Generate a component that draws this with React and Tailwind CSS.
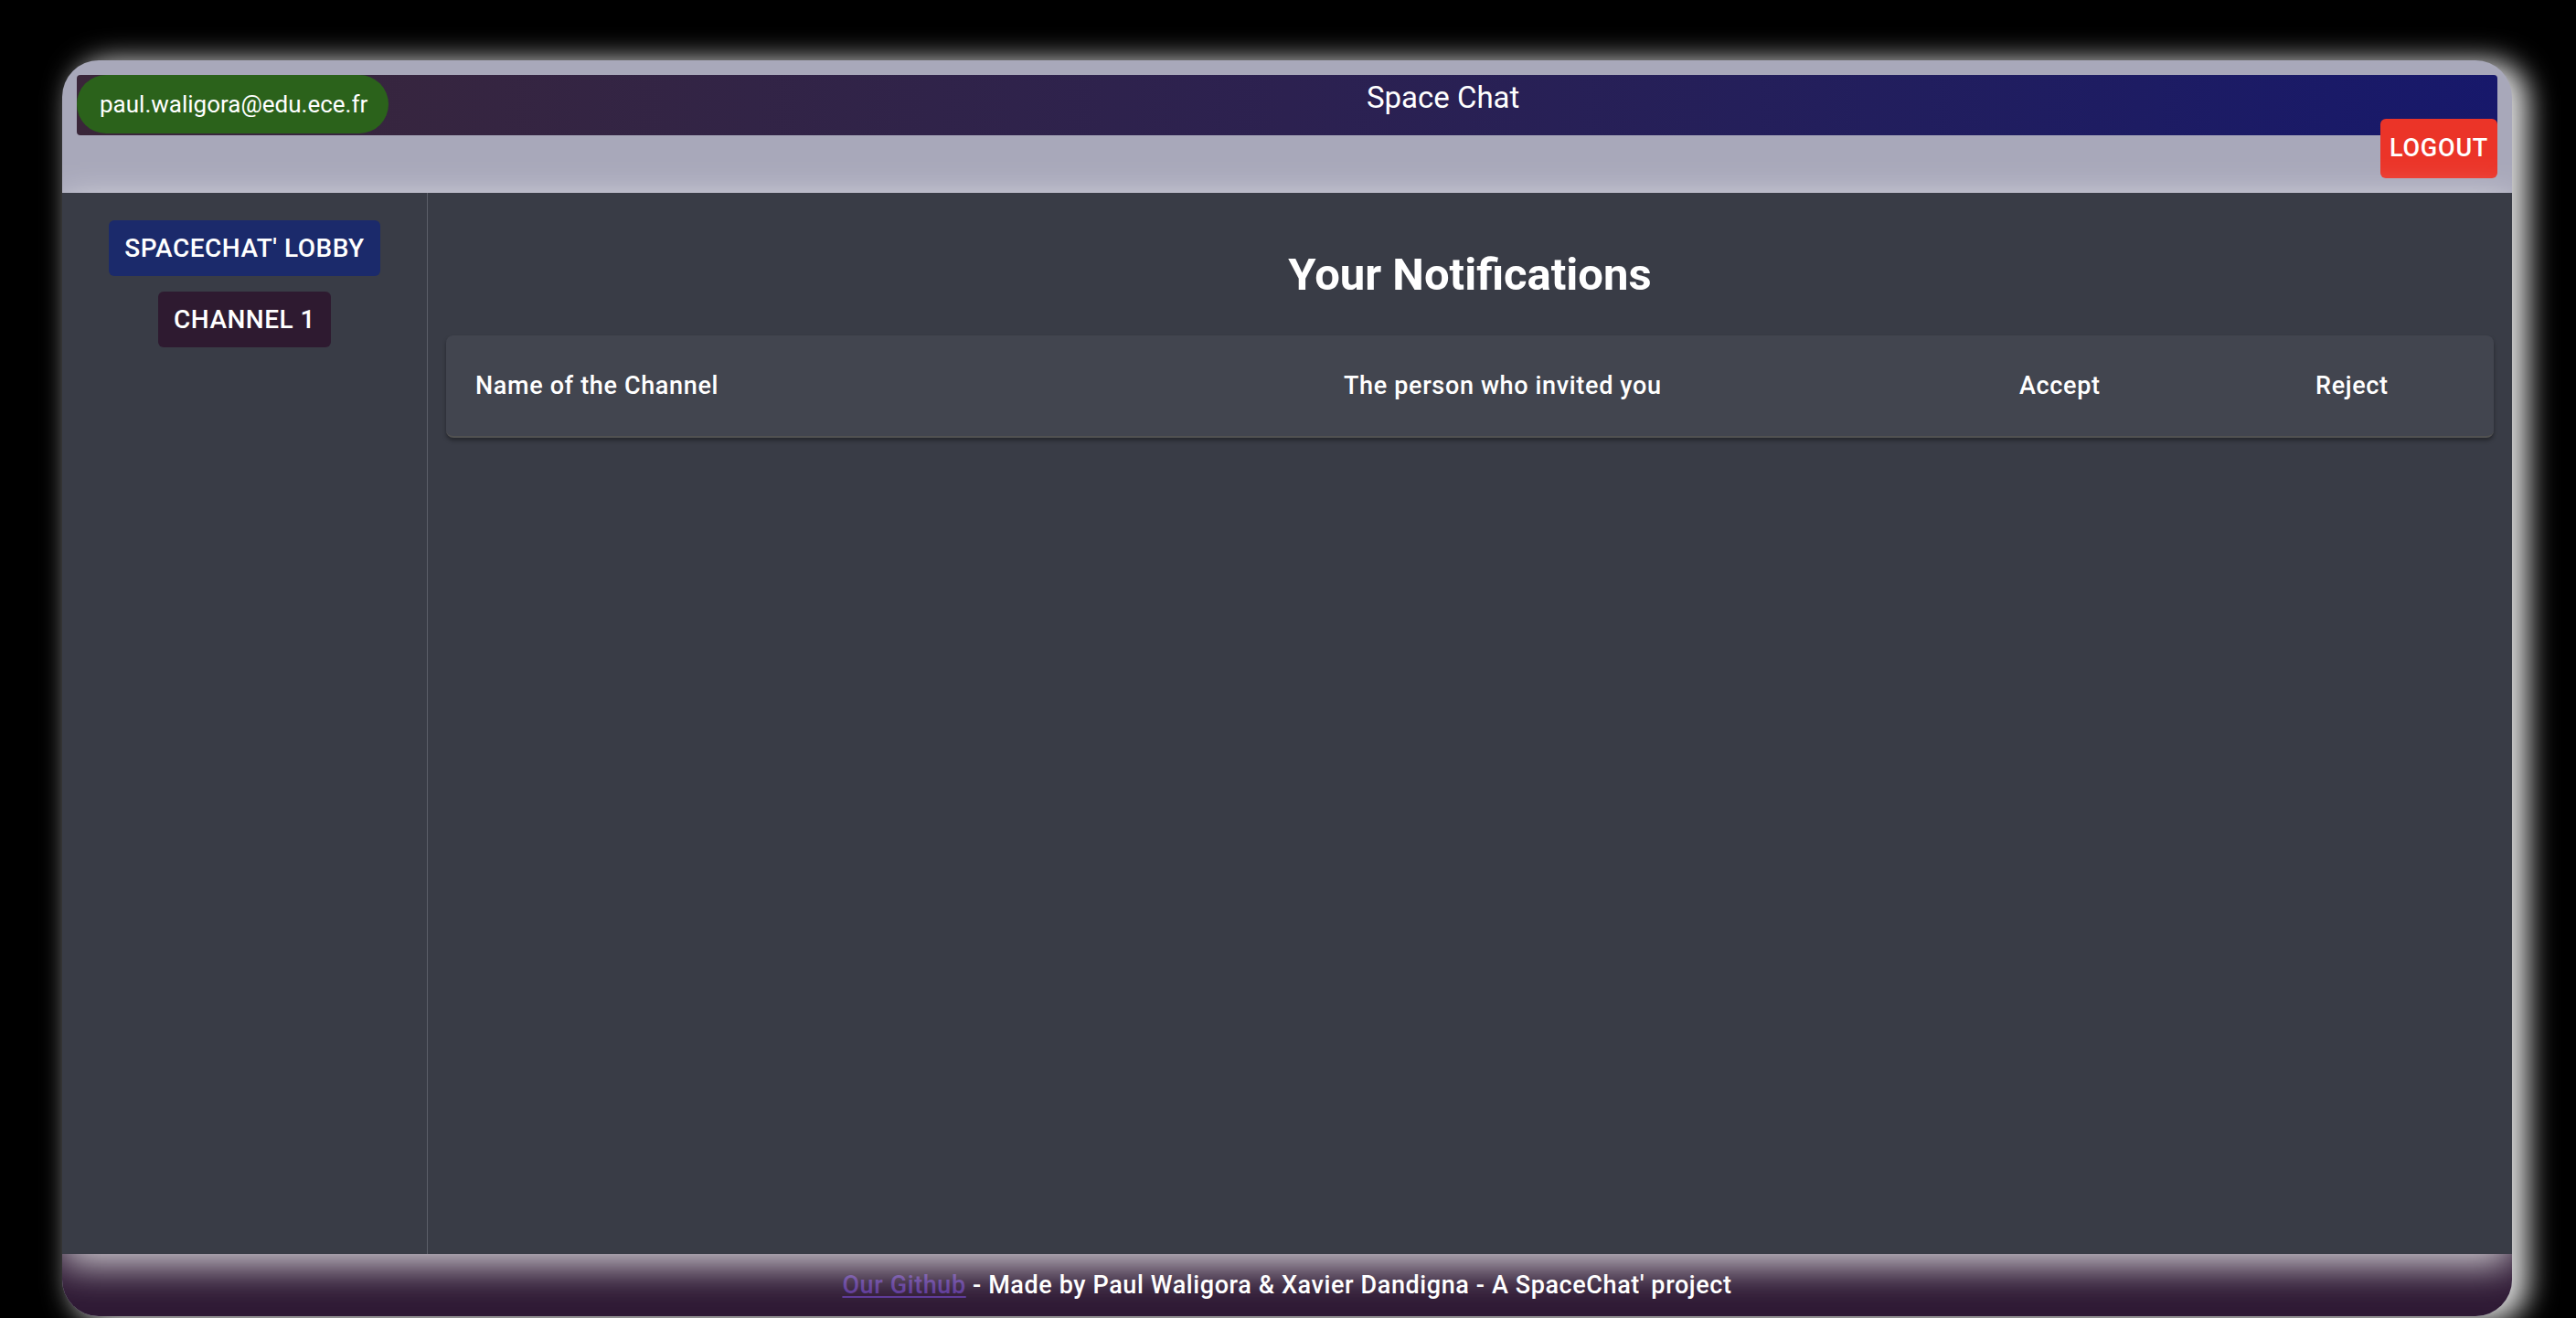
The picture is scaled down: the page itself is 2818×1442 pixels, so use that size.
export default function App() {
  return (
    <div className="w-[2818px] h-[1442px] bg-black pt-[66px] pl-[68px] overflow-hidden" style={{ fontFamily: 'Roboto, "Noto Sans", Arial, sans-serif' }}>
      <div className="w-[2680px] h-[1374px] rounded-[40px] overflow-hidden bg-[#a8a8ba] flex flex-col shadow-[14px_4px_30px_4px_rgba(255,255,255,0.85)]">
        {/* Top area */}
        <div className="px-[16px] pt-[16px] pb-[16px] flex flex-col">
          <div className="h-[66px] rounded-[4px] bg-gradient-to-r from-[#3a2639] via-[#2c2150] to-[#17186b] flex items-start">
            <div className="h-[64px] rounded-full bg-[#2b621b] flex items-center pl-[25px] pr-[23px] text-white text-[26px] whitespace-nowrap">
              paul.waligora@edu.ece.fr
            </div>
            <div className="flex-1 text-center text-white text-[33px] leading-normal pt-0">Space Chat</div>
          </div>
          <div className="flex justify-end -mt-[18px]">
            <button className="relative h-[65px] w-[128px] rounded-[6px] bg-[#eb3428] text-white text-[27px] font-medium tracking-[0.8px] uppercase flex items-center justify-center">
              LOGOUT
            </button>
          </div>
        </div>
        {/* Main */}
        <div className="relative z-10 flex-1 flex bg-[#393c46] shadow-[0_12px_40px_rgba(255,255,255,0.8)]">
          <div className="w-[400px] border-r border-[#5c5f68] flex flex-col items-center pt-[30px] gap-[17px]">
            <div className="h-[61px] px-[17px] rounded-[6px] bg-[#1b2a6b] text-white text-[28px] font-medium tracking-[0.5px] flex items-center">
              SPACECHAT' LOBBY
            </div>
            <div className="h-[61px] px-[17px] rounded-[6px] bg-[#2e1a30] text-white text-[28px] font-medium tracking-[0.5px] flex items-center">
              CHANNEL 1
            </div>
          </div>
          <div className="flex-1 flex flex-col px-[20px]">
            <h1 className="mt-[65px] text-center text-white text-[49px] font-bold leading-none">Your Notifications</h1>
            <div className="mt-[42px] h-[112px] rounded-[8px] bg-[#42454f] border-b-2 border-[#515151] shadow-[0_3px_4px_rgba(0,0,0,0.35)] px-[32px] grid grid-cols-[950px_739px_324px_1fr] items-center text-white text-[27px] tracking-[0.65px] font-medium">
              <div>Name of the Channel</div>
              <div>The person who invited you</div>
              <div>Accept</div>
              <div>Reject</div>
            </div>
          </div>
        </div>
        {/* Footer */}
        <div className="h-[68px] bg-[#2e1934] flex items-center justify-center text-white text-[27px] tracking-[0.6px] font-medium whitespace-nowrap">
          <a className="text-[#5a3596] underline underline-offset-[3px]">Our Github</a>
          <span>&nbsp;- Made by Paul Waligora &amp; Xavier Dandigna - A SpaceChat' project</span>
        </div>
      </div>
    </div>
  );
}
